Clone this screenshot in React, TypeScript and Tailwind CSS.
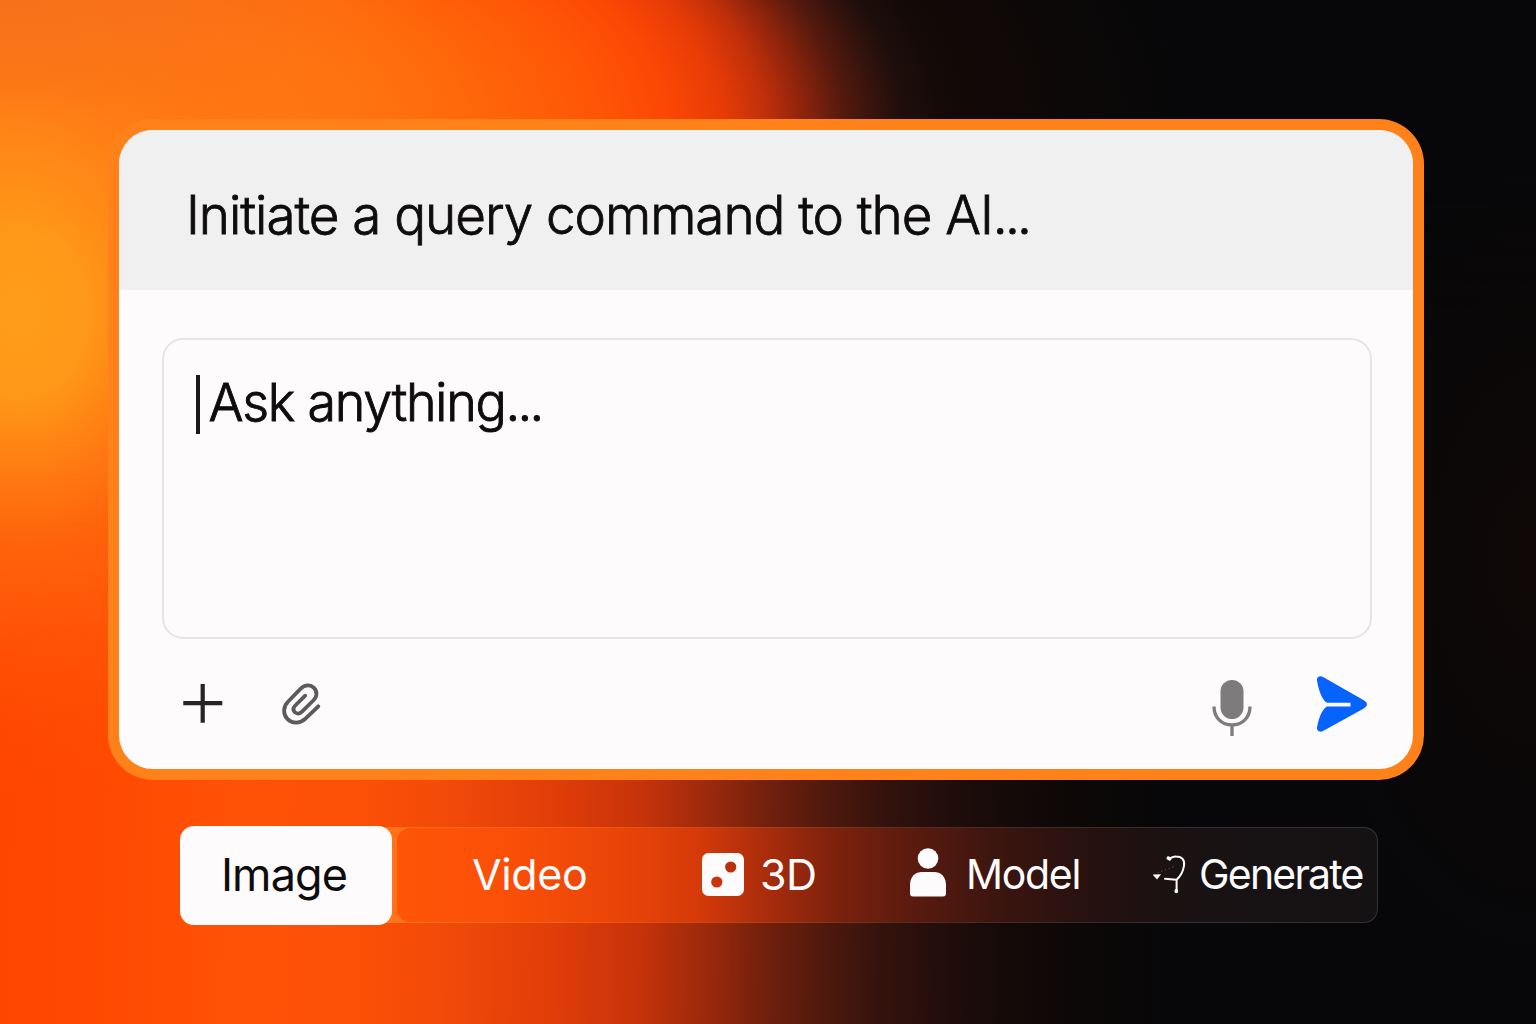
const PlusIcon = () => (
    <svg viewBox="0 0 40 40" className="size-10" fill="none" stroke="#262424" strokeWidth="4.2">
        <path d="M19.700 0v38.800M.300 19.200h39" />
    </svg>
);

const ClipIcon = () => (
    <svg viewBox="0 0 44 48" className="h-12 w-11" fill="none" stroke="#5c5a5a" strokeWidth="3.8" strokeLinecap="round" strokeLinejoin="round">
        <path d="M38.300 26.300 25.500 38.700c-5.500 5.200-13.300 5.200-18 .400-4.800-5-4.500-12.500.700-17.600L20.700 8.700c4.300-4.200 9.800-4.300 13.300-.900 3.500 3.500 3.300 8.800-.700 12.700L22 31.700c-2.400 2.300-5.300 2.300-7.200.500-1.800-1.900-1.700-4.500.500-6.700l9.900-9.800" />
    </svg>
);

const MicIcon = () => (
    <svg viewBox="0 0 40 58" className="h-[58px] w-10">
        <rect x="8.500" y="1" width="23" height="39" rx="11.500" fill="#7d7b7c" />
        <path d="M2 27.500c0 11 7.600 18.500 18 18.500s18-7.500 18-18.500M20 46v11" fill="none" stroke="#7d7b7c" strokeWidth="3.300" />
    </svg>
);

const SendIcon = () => (
    <svg viewBox="0 0 52 58" className="h-[58px] w-[52px]" fill="#0663fd">
        <path d="M1 5.500C.500 2 3.800.300 7 2L47.800 25.200c4.200 2.500 4.200 5.700 0 8.200L7 56c-3.200 1.700-6.500 0-6-3.500 1.300-7.500 3.600-14.500 7.500-19 1.200-1.400 2.200-2 4-2H34.500v-3.700H12.500c-1.800 0-2.800-.600-4-2C4.600 21 2.300 13 1 5.500Z" />
    </svg>
);

const DiceIcon = () => (
    <svg viewBox="0 0 42 43" className="h-[43px] w-[42px]">
        <rect width="42" height="43" rx="6.500" fill="#fdfbfc" />
        <circle cx="28.700" cy="14" r="5.600" fill="#bb300c" />
        <circle cx="14.800" cy="29" r="5.600" fill="#cb330b" />
    </svg>
);

const PersonIcon = () => (
    <svg viewBox="0 0 38 49" className="mb-[3px] h-[49px] w-[38px]" fill="#fdfbfc">
        <circle cx="19" cy="10.500" r="10.300" />
        <path d="M1 37c0-8.500 5.500-13 12-13h12c6.500 0 12 4.500 12 13v8.500c0 2-1 3-3 3H4c-2 0-3-1-3-3Z" />
    </svg>
);

const NodesIcon = () => (
    <svg viewBox="0 0 34 40" className="h-10 w-[34px]" fill="none" stroke="#fdfbfc" strokeWidth="2" strokeLinecap="round">
        <path d="M15.500 4c2.500.800 4-1.700 7.500-1.600 6.500 0 8.900 3.800 8 9.500-1 6-3.500 10.500-7.500 13.800M12 24.800l11.500 1M23.600 25.800v11" />
        <path d="M15.300 4.200l1.400.600M23.300 36.800v.700" strokeWidth="3.600" />
        <path d="M1.800 21.500 4 24l2-2.700Z" fill="#fdfbfc" />
        <path d="M5 18.500 23 11.800" strokeWidth=".600" strokeDasharray=".400 3.500" opacity=".500" />
    </svg>
);

const tabs = [
    { label: 'Video', width: 'w-[230px]', text: 'text-[43px] tracking-[-0.4px]' },
    { label: '3D', icon: DiceIcon, width: 'w-[207px] gap-[16px]', text: 'text-[43px] tracking-[-0.6px]' },
    { label: 'Model', icon: PersonIcon, width: 'w-[244px] gap-[19px]', text: 'text-[41px] tracking-[-1.3px]' },
    { label: 'Generate', icon: NodesIcon, width: 'w-[224px] gap-[12px]', text: 'text-[41px] tracking-[-1.8px]' },
];

const Backdrop = () => (
    <div className="absolute inset-0 -z-10 bg-[linear-gradient(91deg,#ff4500_0px,#ff4a02_130px,#ff5206_250px,#fc5007_370px,#f24a08_460px,#e03d08_570px,#c7330a_655px,#9c290c_722px,#73200d_780px,#4f190d_840px,#33120c_900px,#1c0c0a_980px,#0e0807_1070px,#070709_1190px)]">
        {/* upper edge of the glow */}
        <div className="absolute inset-x-0 top-0 h-[360px] bg-[radial-gradient(1000px_450px_at_0px_130px,#ff8518_0%,#ff7a14_30%,#ff6a0c_45%,#ff5505_60%,#fb4705_67%,#e63b07_72.5%,#c2300a_76.5%,#9a260c_79.5%,#76200d_82%,#54190d_84.5%,#36130d_87.5%,#1e0e0b_90.5%,#130907_95%,#0c0807_107%,#070709_120%)] [mask-image:linear-gradient(#000_50%,transparent)]" />
        {/* amber light on the left */}
        <div className="absolute inset-0 bg-[radial-gradient(400px_480px_at_20px_315px,#ff9d1a_0%,#ff9b19f4_17%,#ff8c17c8_32%,#ff751398_48%,#ff680e58_68%,#ff5a0820_86%,#ff500400_100%)]" />
        <div className="absolute inset-0 bg-[radial-gradient(420px_120px_at_0px_0px,#f4701cd0,#f4701c00)]" />
        <div className="absolute inset-0 bg-[radial-gradient(240px_420px_at_1536px_560px,#0f0807,#0f080700)]" />
    </div>
);

export default function App() {
    return (
        <main className="relative isolate h-[1024px] w-[1536px] overflow-hidden pl-[108px] pt-[119px] font-['Inter',sans-serif] text-[#0e0c0d]">
            <Backdrop />

            {/* Prompt card */}
            <section className="h-[661px] w-[1316px] rounded-[45px] bg-[#ff811a] p-[11px]">
                <div className="flex h-full flex-col overflow-hidden rounded-[34px] bg-[#fdfbfc]">
                    <header className="flex h-40 shrink-0 items-center bg-[#f1f0f0] pl-[67px] pt-[11px]">
                        <h1 className="text-[53px] font-light leading-none tracking-[-1.05px] [-webkit-text-stroke:0.8px_#0e0c0d]">
                            Initiate a query command to the AI<span className="tracking-[-2.8px]">...</span>
                        </h1>
                    </header>

                    <div className="mx-[43px] mt-12 flex h-[301px] w-[1210px] shrink-0 items-start rounded-[21px] border-2 border-[#e6e5e6] pl-8 pt-[35px]">
                        <span className="h-[59px] w-[3.5px] bg-[#1b191a]" />
                        <p className="ml-[9px] text-[52px] font-light leading-[55px] tracking-[-1.25px] [-webkit-text-stroke:0.9px_#0e0c0d]">
                            Ask anything<span className="tracking-[-2.7px]">...</span>
                        </p>
                    </div>

                    <div className="flex h-[130px] items-center pl-16 pr-[45px]">
                        <button aria-label="Add"><PlusIcon /></button>
                        <button aria-label="Attach" className="ml-[57px]"><ClipIcon /></button>
                        <button aria-label="Dictate" className="ml-auto mt-2"><MicIcon /></button>
                        <button aria-label="Send" className="ml-16"><SendIcon /></button>
                    </div>
                </div>
            </section>

            {/* Mode tabs */}
            <nav className="ml-[72px] mt-[46px] flex h-[99px] w-[1198px] items-start">
                <button className="z-10 h-[99px] w-[212px] rounded-[14px] bg-[#fdfbfc] pb-[3px] pr-1 text-[45px] leading-none tracking-[-0.9px]">Image</button>
                <div className="-ml-3 mt-px h-[96px] w-[998px] rounded-r-[14px] bg-[linear-gradient(90deg,#ff751a_0px,#ff751ac0_100px,#ff6a1880_300px,#ff906038_520px,#ffffff2c_800px)] p-px pl-[17px]">
                    <div className="flex h-full items-center rounded-[13px] bg-[linear-gradient(90deg,#ff5507_0px,#fa4f07_110px,#ea4508_220px,#d63a09_300px,#a92c0c_370px,#7c210d_440px,#5c1b0e_510px,#3c150f_600px,#241110_700px,#181213_810px,#151213_980px)] pb-[2px] pl-[75px] text-[#fdfbfc]">
                        {tabs.map((tab) => (
                            <button key={tab.label} className={`flex shrink-0 items-center ${tab.width}`}>
                                {tab.icon && <tab.icon />}
                                <span className={`leading-none ${tab.text}`}>{tab.label}</span>
                            </button>
                        ))}
                    </div>
                </div>
            </nav>
        </main>
    );
}
